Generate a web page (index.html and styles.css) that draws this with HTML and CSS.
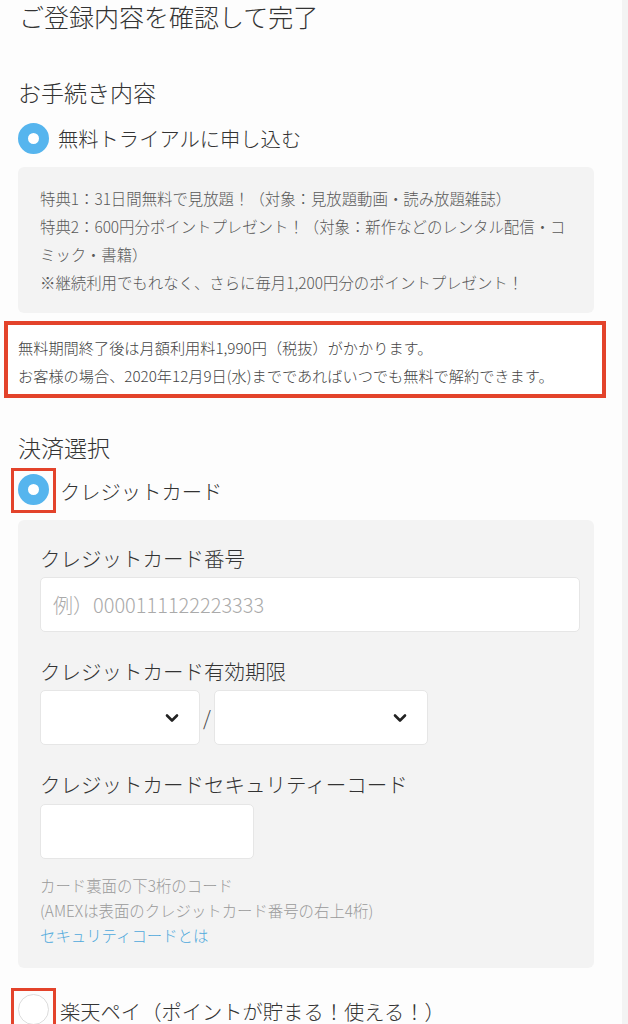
FILE: index.html
```html
<!DOCTYPE html>
<html lang="ja">
<head>
    <meta charset="UTF-8">
    <meta name="viewport" content="width=device-width, initial-scale=1.0">
    <title>ご登録内容を確認して完了</title>
    <link rel="stylesheet" href="styles.css">
</head>
<body>
    <div class="page">
        <h1 class="page-title">ご登録内容を確認して完了</h1>

        <!-- お手続き内容 -->
        <h2 class="section-title first">お手続き内容</h2>
        <label class="choice">
            <input type="radio" name="plan" checked>
            <span>無料トライアルに申し込む</span>
        </label>

        <div class="benefit">
            <p>特典1：31日間無料で見放題！（対象：見放題動画・読み放題雑誌）</p>
            <p>特典2：600円分ポイントプレゼント！（対象：新作などのレンタル配信・コミック・書籍）</p>
            <p>※継続利用でもれなく、さらに毎月1,200円分のポイントプレゼント！</p>
        </div>

        <div class="notice">
            <p>無料期間終了後は月額利用料1,990円（税抜）がかかります。</p>
            <p>お客様の場合、2020年12月9日(水)までであればいつでも無料で解約できます。</p>
        </div>

        <!-- 決済選択 -->
        <h2 class="section-title">決済選択</h2>
        <label class="choice">
            <span class="mark"><input type="radio" name="pay" checked></span>
            <span>クレジットカード</span>
        </label>

        <div class="card-panel">
            <p class="field-label">クレジットカード番号</p>
            <input class="text-input wide" type="text" placeholder="例）0000111122223333">

            <p class="field-label">クレジットカード有効期限</p>
            <div class="expiry">
                <div class="select-wrapper month">
                    <select name="month"><option></option></select>
                    <svg class="chevron" width="14" height="10" viewBox="0 0 14 10"><path d="M2 2.5 L7 7.5 L12 2.5" fill="none" stroke="#222" stroke-width="2.6" stroke-linecap="round" stroke-linejoin="round"/></svg>
                </div>
                <span class="slash">/</span>
                <div class="select-wrapper year">
                    <select name="year"><option></option></select>
                    <svg class="chevron" width="14" height="10" viewBox="0 0 14 10"><path d="M2 2.5 L7 7.5 L12 2.5" fill="none" stroke="#222" stroke-width="2.6" stroke-linecap="round" stroke-linejoin="round"/></svg>
                </div>
            </div>

            <p class="field-label">クレジットカードセキュリティーコード</p>
            <input class="text-input short" type="text">

            <div class="help">
                <p>カード裏面の下3桁のコード</p>
                <p>(AMEXは表面のクレジットカード番号の右上4桁)</p>
                <a href="#">セキュリティコードとは</a>
            </div>
        </div>

        <label class="choice last">
            <span class="mark"><input type="radio" name="pay"></span>
            <span>楽天ペイ（ポイントが貯まる！使える！）</span>
        </label>
    </div>
</body>
</html>
```

FILE: styles.css
```css
* {
    box-sizing: border-box;
}

body {
    margin: 0;
    background: #fdfdfd;
    color: #333;
    font-family: "Noto Sans CJK JP", "Noto Sans", sans-serif;
    font-weight: 300;
}

p {
    margin: 0;
}

.page {
    width: 628px;
    height: 1024px;
    overflow: hidden;
    border-right: 6px solid #f3f3f3;
}

.page-title {
    margin: 0;
    padding: 1px 0 0 19px;
    font-size: 25px;
    font-weight: 300;
    line-height: 31px;
}

.section-title {
    margin: 33px 0 0;
    padding-left: 18px;
    font-size: 23px;
    font-weight: 300;
    line-height: 32px;
}

.section-title.first {
    margin-top: 44px;
}

/* radio rows */

.choice {
    display: flex;
    align-items: center;
    gap: 9px;
    margin-top: 14px;
    padding-left: 18px;
    font-size: 20.3px;
    line-height: 32px;
}

.choice input[type="radio"] {
    -webkit-appearance: none;
    appearance: none;
    flex: none;
    width: 31px;
    height: 31px;
    margin: 0;
    border-radius: 50%;
    border: 1.5px solid #dcdcdc;
    background: #fff;
}

.choice input[type="radio"]:checked {
    border: 10px solid #56b5ee;
}

/* red frame around the radio */
.choice .mark {
    display: flex;
    padding: 3px 4px 5px 4px;
    border: 3px solid #e3432b;
}

.choice:has(.mark) {
    gap: 4px;
    padding-left: 11px;
    margin-top: 5px;
}

.choice.last {
    margin-top: 20px;
}

/* benefit box */

.benefit {
    margin: 13px 28px 0 18px;
    padding: 17px 22px 17px 22px;
    background: #f3f3f3;
    border-radius: 6px;
    color: #585858;
    font-size: 15.4px;
    line-height: 28px;
}

.notice {
    margin: 8px 16px 0 4px;
    padding: 8px 10px 5px 10px;
    border: 4px solid #e3432b;
    background: #fff;
    color: #444;
    font-size: 15.2px;
    line-height: 28px;
}

/* credit card panel */

.card-panel {
    margin: 7px 28px 0 18px;
    padding: 13px 20px 20px 22px;
    background: #f3f3f3;
    border-radius: 6px;
}

.field-label {
    margin-top: 24px;
    font-size: 20.5px;
    line-height: 30px;
}

.field-label:first-child {
    margin-top: 10px;
}

.text-input {
    display: block;
    height: 55px;
    margin-top: 4px;
    padding: 0 12px;
    border: 1px solid #e6e6e6;
    border-radius: 5px;
    background: #fff;
    color: #333;
    font-family: inherit;
    font-weight: 300;
    font-size: 20px;
    outline: none;
}

.text-input::placeholder {
    color: #aaa;
}

.text-input.wide {
    width: 540px;
}

.text-input.short {
    width: 214px;
    margin-top: 5px;
}

.expiry {
    display: flex;
    align-items: center;
    gap: 3px;
    margin-top: 4px;
}

.select-wrapper {
    position: relative;
}

.select-wrapper select {
    -webkit-appearance: none;
    appearance: none;
    display: block;
    width: 100%;
    height: 55px;
    border: 1px solid #e6e6e6;
    border-radius: 5px;
    background: #fff;
    outline: none;
}

.select-wrapper.month {
    width: 160px;
}

.select-wrapper.year {
    width: 214px;
}

.chevron {
    position: absolute;
    top: 23px;
    right: 21px;
}

.slash {
    color: #444;
    font-size: 20px;
    line-height: 30px;
}

.help {
    margin-top: 14px;
    color: #9a9a9a;
    font-size: 15.4px;
    line-height: 25px;
}

.help a {
    color: #4fa9dc;
    text-decoration: none;
}
```
